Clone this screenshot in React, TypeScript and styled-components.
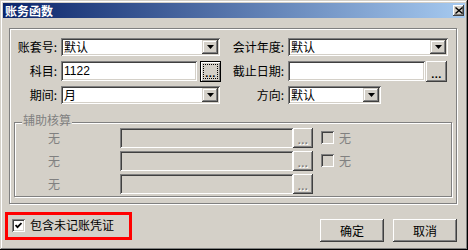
import React from 'react';
import styled, { createGlobalStyle } from 'styled-components';

const Face = '#d4d0c8';
const Shadow = '#808080';
const DarkShadow = '#404040';

const raised = `box-shadow: inset -1px -1px ${DarkShadow}, inset 1px 1px #fff, inset -2px -2px ${Shadow}, inset 2px 2px ${Face};`;
const sunken = `box-shadow: inset 1px 1px ${Shadow}, inset -1px -1px #fff, inset 2px 2px ${DarkShadow}, inset -2px -2px ${Face};`;

const GlobalStyle = createGlobalStyle`
    html, body {
        margin: 0;
        padding: 0;
        background: ${Face};
    }
    body {
        font-family: "Noto Sans CJK SC", "Liberation Sans", sans-serif;
        font-size: 12px;
        color: #000;
    }
    * {
        box-sizing: border-box;
    }
`;

const App: React.FC = () => {
    return (
        <>
            <GlobalStyle />
            <Window>
                <TitleBar>
                    <TitleText>账务函数</TitleText>
                    <CloseButton>
                        <svg width="8" height="7" viewBox="0 0 8 7">
                            <path d="M0.5 0.5 L7.5 6.5 M7.5 0.5 L0.5 6.5" stroke="#000" strokeWidth="1.4" />
                        </svg>
                    </CloseButton>
                </TitleBar>

                <MainGroup>
                    <Row $h={24}>
                        <Label $w={47}>账套号:</Label>
                        <Cell $w={160}>
                            <Combo $w={159} value="默认" />
                        </Cell>
                        <Label $w={63}>会计年度:</Label>
                        <Cell $w={160}>
                            <Combo $w={160} value="默认" />
                        </Cell>
                    </Row>
                    <Row $h={24}>
                        <Label $w={47}>科目:</Label>
                        <Cell $w={160}>
                            <TextBox $w={137}>1122</TextBox>
                            <DotsButton $w={21} $h={21} $gap={3} $focused>...</DotsButton>
                        </Cell>
                        <Label $w={63}>截止日期:</Label>
                        <Cell $w={160}>
                            <TextBox $w={137} />
                            <DotsButton $w={21} $h={21} $gap={1}>...</DotsButton>
                        </Cell>
                    </Row>
                    <Row $h={24}>
                        <Label $w={47}>期间:</Label>
                        <Cell $w={160}>
                            <Combo $w={159} value="月" />
                        </Cell>
                        <Label $w={63}>方向:</Label>
                        <Cell $w={160}>
                            <Combo $w={93} value="默认" />
                        </Cell>
                    </Row>

                    <SubGroup>
                        <Legend>辅助核算</Legend>
                        {[true, true, false].map((hasCheck, i) => (
                            <Row $h={23} key={i}>
                                <Label $w={45} $disabled $gap={60}>无</Label>
                                <TextBox $w={173} $disabled />
                                <DotsButton $w={20} $h={20} $gap={0} $disabled>...</DotsButton>
                                {hasCheck && (
                                    <>
                                        <CheckBox $disabled $gap={8} />
                                        <CheckLabel $disabled>无</CheckLabel>
                                    </>
                                )}
                            </Row>
                        ))}
                    </SubGroup>
                </MainGroup>

                <Footer>
                    <Highlight>
                        <CheckBox>
                            <svg width="7" height="7" viewBox="0 0 7 7">
                                <path d="M0.5 3 L2.5 5.2 L6.5 1" stroke="#000" strokeWidth="1.8" fill="none" />
                            </svg>
                        </CheckBox>
                        <CheckLabel>包含未记账凭证</CheckLabel>
                    </Highlight>
                    <ButtonBar>
                        <PushButton>确定</PushButton>
                        <PushButton>取消</PushButton>
                    </ButtonBar>
                </Footer>
            </Window>
        </>
    );
};

const Combo: React.FC<{ $w: number; value: string }> = ({ $w, value }) => (
    <ComboBox $w={$w}>
        <ComboText>{value}</ComboText>
        <DropButton>
            <svg width="7" height="4" viewBox="0 0 7 4">
                <polygon points="0,0 7,0 3.5,4" fill="#000" />
            </svg>
        </DropButton>
    </ComboBox>
);

const Window = styled.div`
    width: 468px;
    height: 250px;
    padding: 3px;
    background: ${Face};
    box-shadow: inset -1px -1px #000, inset 1px 1px ${Face}, inset -2px -2px ${Shadow}, inset 2px 2px #fff;
    display: flex;
    flex-direction: column;
`;

const TitleBar = styled.div`
    height: 15px;
    background: linear-gradient(to right, #0a246a, #a6caf0);
    display: flex;
    align-items: center;
    justify-content: space-between;
    padding: 0 1px 0 2px;
`;

const TitleText = styled.div`
    color: #fff;
    font-weight: bold;
    font-size: 12px;
    line-height: 15px;
`;

const CloseButton = styled.div`
    width: 11px;
    height: 11px;
    background: ${Face};
    ${raised}
    display: flex;
    align-items: center;
    justify-content: center;
`;

const MainGroup = styled.div`
    margin: 10px 0 0 6px;
    width: 448px;
    height: 176px;
    padding-top: 6px;
    border: 1px solid ${Shadow};
    box-shadow: inset 1px 1px #fff, 1px 1px #fff;
`;

const SubGroup = styled.div`
    position: relative;
    margin: 15px 0 0 4px;
    width: 438px;
    height: 75px;
    padding-top: 3px;
    border: 1px solid ${Shadow};
    box-shadow: inset 1px 1px #fff, 1px 1px #fff;
`;

const Legend = styled.div`
    position: absolute;
    top: -9px;
    left: 7px;
    padding: 0 1px;
    background: ${Face};
    color: ${Shadow};
    line-height: 12px;
`;

const Row = styled.div<{ $h: number }>`
    display: flex;
    align-items: center;
    height: ${(p) => p.$h}px;
`;

const Label = styled.div<{ $w: number; $disabled?: boolean; $gap?: number }>`
    width: ${(p) => p.$w}px;
    margin-right: ${(p) => p.$gap ?? 4}px;
    text-align: right;
    white-space: nowrap;
    color: ${(p) => (p.$disabled ? Shadow : '#000')};
    line-height: 14px;
`;

const Cell = styled.div<{ $w: number }>`
    width: ${(p) => p.$w}px;
    display: flex;
    align-items: center;
`;

const ComboBox = styled.div<{ $w: number }>`
    width: ${(p) => p.$w}px;
    height: 18px;
    background: #fff;
    ${sunken}
    display: flex;
    align-items: center;
    justify-content: space-between;
    padding: 2px;
`;

const ComboText = styled.div`
    padding-left: 1px;
    line-height: 14px;
`;

const DropButton = styled.div`
    width: 16px;
    height: 14px;
    background: ${Face};
    box-shadow: inset -1px -1px ${DarkShadow}, inset 1px 1px ${Face}, inset -2px -2px ${Shadow}, inset 2px 2px #fff;
    display: flex;
    align-items: center;
    justify-content: center;
`;

const TextBox = styled.div<{ $w: number; $disabled?: boolean }>`
    width: ${(p) => p.$w}px;
    height: 20px;
    background: ${(p) => (p.$disabled ? Face : '#fff')};
    ${sunken}
    padding: 3px 3px 0;
    line-height: 14px;
    font-family: "Liberation Sans", "Noto Sans CJK SC", sans-serif;
`;

const DotsButton = styled.div<{ $w: number; $h: number; $gap: number; $focused?: boolean; $disabled?: boolean }>`
    position: relative;
    width: ${(p) => p.$w}px;
    height: ${(p) => p.$h}px;
    margin-left: ${(p) => p.$gap}px;
    background: ${Face};
    ${(p) =>
        p.$focused
            ? `border: 1px solid #000; box-shadow: inset 1px 1px #fff, inset -1px -1px ${Shadow};`
            : raised}
    display: flex;
    align-items: flex-end;
    justify-content: center;
    padding-bottom: 4px;
    font-family: "Liberation Sans", sans-serif;
    font-weight: bold;
    font-size: 11px;
    line-height: 8px;
    letter-spacing: 0.5px;
    color: ${(p) => (p.$disabled ? Shadow : '#000')};
    text-shadow: ${(p) => (p.$disabled ? '1px 1px #fff' : 'none')};

    ${(p) =>
        p.$focused &&
        `&::after {
            content: '';
            position: absolute;
            inset: 2px;
            border: 1px dotted #000;
        }`}
`;

const CheckBox = styled.div<{ $disabled?: boolean; $gap?: number }>`
    width: 13px;
    height: 13px;
    margin-left: ${(p) => p.$gap ?? 0}px;
    background: ${(p) => (p.$disabled ? Face : '#fff')};
    ${sunken}
    display: flex;
    align-items: center;
    justify-content: center;
`;

const CheckLabel = styled.div<{ $disabled?: boolean }>`
    margin-left: 5px;
    color: ${(p) => (p.$disabled ? Shadow : '#000')};
    line-height: 14px;
    white-space: nowrap;
`;

const Footer = styled.div`
    display: flex;
    align-items: flex-start;
`;

const Highlight = styled.div`
    margin: 8px 0 0 2px;
    width: 127px;
    height: 28px;
    border: 3px solid #ff0000;
    display: flex;
    align-items: center;
    padding: 0 0 2px 4px;
`;

const ButtonBar = styled.div`
    margin: 15px 8px 0 auto;
    display: flex;
    gap: 9px;
`;

const PushButton = styled.div`
    width: 64px;
    height: 23px;
    background: ${Face};
    ${raised}
    display: flex;
    align-items: center;
    justify-content: center;
    line-height: 14px;
`;

export default App;
